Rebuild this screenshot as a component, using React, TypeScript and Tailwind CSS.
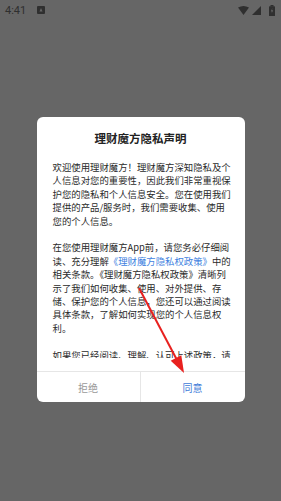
import React from "react";

const cjk = { fontFamily: '"Noto Sans CJK SC", "Noto Sans", sans-serif' };

function StatusBar() {
    return (
        <div className="flex h-[20px] items-center justify-between pl-[5px] pr-[6px] text-[#2f2f2f]">
            <div className="flex items-center gap-[11px]">
                <span className="text-[11px] leading-none" style={{ fontFamily: "Roboto, sans-serif" }}>4:41</span>
                <svg width="8" height="8" viewBox="0 0 8 8">
                    <rect x="0" y="0" width="8" height="8" rx="1" fill="#2f2f2f" />
                    <path d="M4 2 L5.5 5.5 H2.5 Z" fill="#666" />
                </svg>
            </div>
            <div className="flex items-center gap-[3px]">
                <svg width="11" height="9" viewBox="0 0 11 9">
                    <path d="M0 1.5 Q5.5 -1.5 11 1.5 L5.5 9 Z" fill="#2f2f2f" />
                </svg>
                <svg width="9" height="9" viewBox="0 0 9 9">
                    <path d="M9 0 V9 H0 Z" fill="#2f2f2f" />
                </svg>
                <svg width="6" height="11" viewBox="0 0 6 11" className="ml-[5px]">
                    <rect x="1.5" y="0" width="3" height="1.5" fill="#2f2f2f" />
                    <rect x="0" y="1.2" width="6" height="9.8" rx="0.6" fill="#2f2f2f" />
                    <path d="M3.4 3 L1.8 6.4 H3 L2.6 8.6 L4.2 5.2 H3 Z" fill="#666" />
                </svg>
            </div>
        </div>
    );
}

export default function App() {
    return (
        <main className="relative h-[501px] w-[281px] overflow-hidden bg-[#666666]">
            <StatusBar />

            <div className="mx-auto mt-[97px] flex h-[285px] w-[208px] flex-col rounded-[6px] bg-white" style={cjk}>
                <h2 className="pt-[13px] text-center text-[11.5px] font-bold leading-[16px] text-[#222]">理财魔方隐私声明</h2>

                <div className="mt-[15px] h-[197px] overflow-hidden pl-[16px]">
                    <div className="w-[180px] text-[9.4px] leading-[13.4px] text-[#2a2a2a]">
                        <p>欢迎使用理财魔方！理财魔方深知隐私及个人信息对您的重要性，因此我们非常重视保护您的隐私和个人信息安全。您在使用我们提供的产品/服务时，我们需要收集、使用您的个人信息。</p>
                        <p className="mt-[13.4px]">
                            在您使用理财魔方App前，请您务必仔细阅读、充分理解
                            <span className="text-[#3e7fe0]">《理财魔方隐私权政策》</span>
                            中的相关条款。《理财魔方隐私权政策》清晰列示了我们如何收集、使用、对外提供、存储、保护您的个人信息，您还可以通过阅读具体条款，了解如何实现您的个人信息权利。
                        </p>
                        <p className="mt-[13.4px]">如果您已经阅读、理解、认可上述政策，请点击“同意”开始使用我们的产品和服务。</p>
                    </div>
                </div>

                <div className="mt-[13px] grid h-[31px] grid-cols-2 border-t border-[#e6e6e6] text-[10px]">
                    <button className="flex items-center justify-center border-r border-[#e6e6e6] text-[#9a9a9a]">拒绝</button>
                    <button className="flex items-center justify-center text-[#3e7bd8]">同意</button>
                </div>
            </div>

            {/* red annotation arrow */}
            <svg className="pointer-events-none absolute left-0 top-0" width="281" height="501" viewBox="0 0 281 501">
                <line x1="139" y1="288" x2="177" y2="360" stroke="#e8211f" strokeWidth="2" />
                <path d="M184 373 L170.7 360.8 L181.3 355.2 Z" fill="#e8211f" />
            </svg>
        </main>
    );
}
